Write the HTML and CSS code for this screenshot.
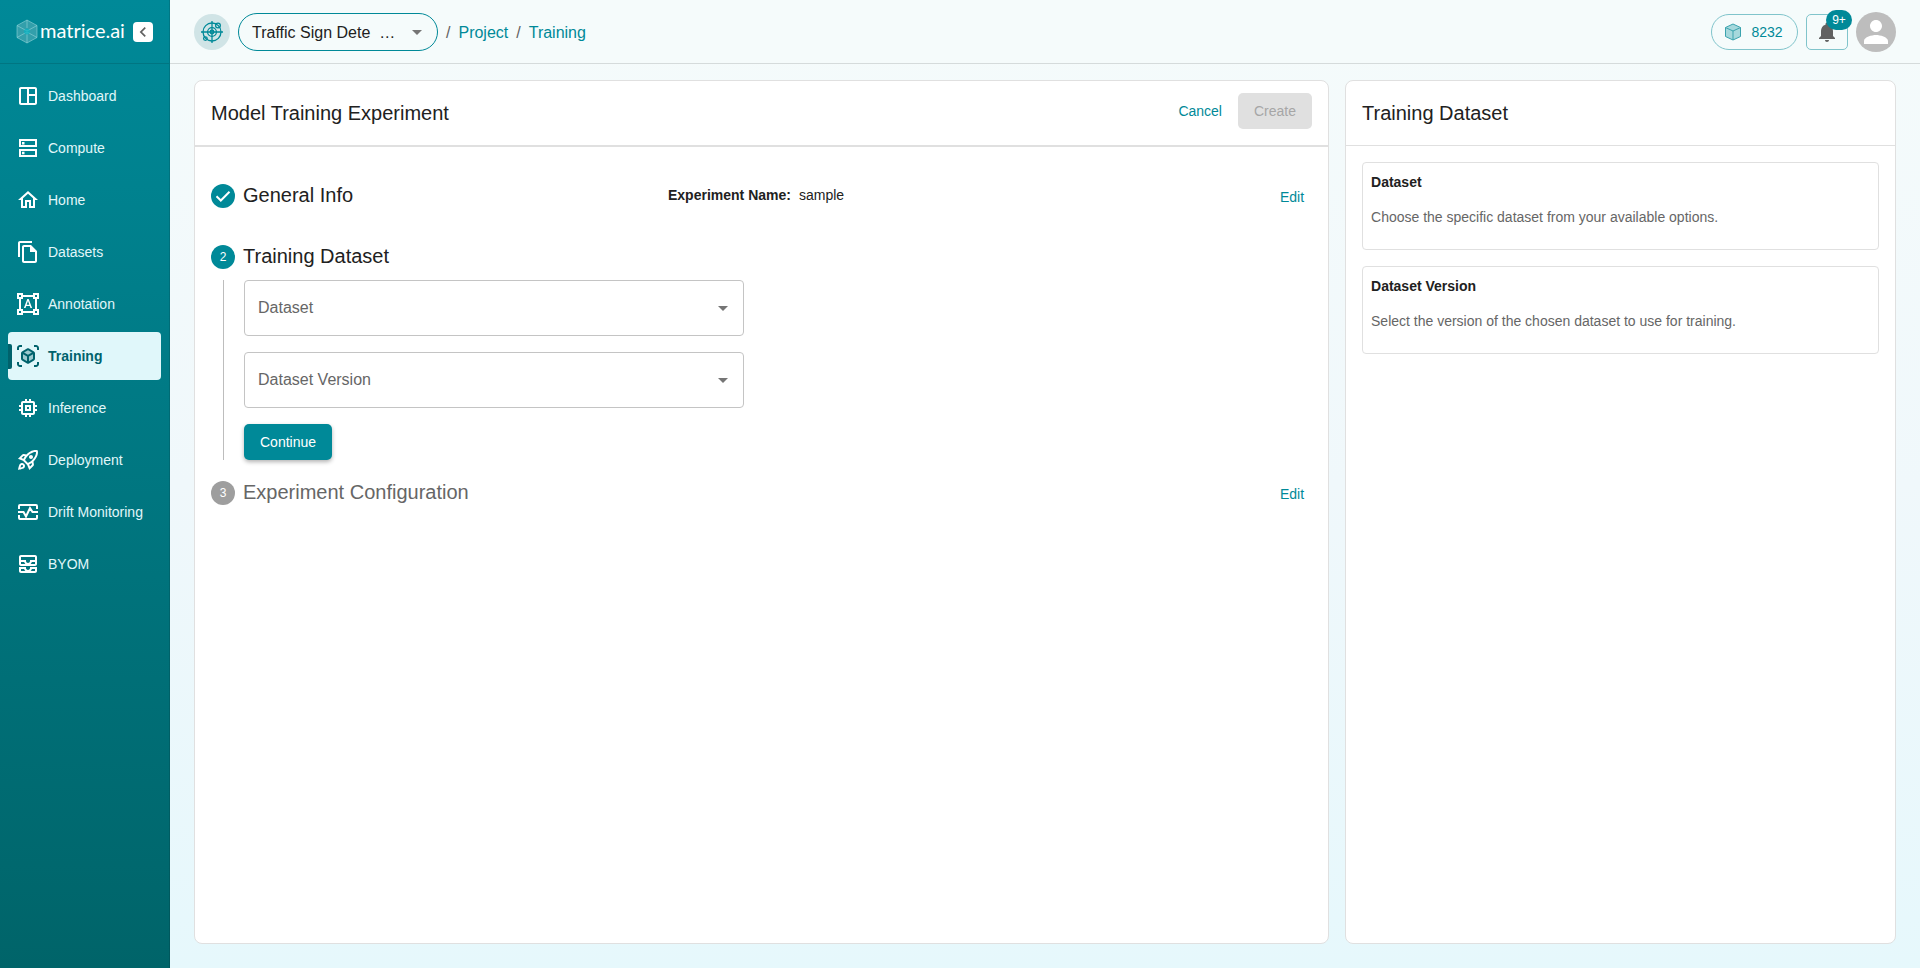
FILE: index.html
```html
<!DOCTYPE html>
<html lang="en">
<head>
<meta charset="utf-8">
<title>Model Training Experiment</title>
<link rel="stylesheet" href="styles.css">
</head>
<body>
<div class="app">
  <aside class="sidebar">
    <div class="brand">
      <a class="brand-link" href="#">
        <svg class="brand-mark" viewBox="0 0 22 25" fill="#fff" fill-opacity=".2" stroke="#a5dfe3" stroke-opacity=".5" stroke-width="1"><path d="M11 1 21 6.500V18.500L11 24 1 18.500V6.500Z"/><path fill="none" d="M11 1V9M11 14V24M1 6.500 11 12 21 6.500M1 18.500 11 13 21 18.500"/><circle cx="11" cy="12.500" r="3" fill="#00b4c4" fill-opacity=".6" stroke="none"/></svg>
        <span class="brand-name">matrice.ai</span>
      </a>
      <button class="collapse" type="button" aria-label="Collapse sidebar"><svg viewBox="0 0 24 24"><path fill="#616161" d="M15.410 7.410 14 6l-6 6 6 6 1.410-1.410L10.830 12z"/></svg></button>
    </div>
    <nav class="nav">
      <a class="nav-item" href="#"><svg viewBox="0 0 24 24"><path d="M19 3H5c-1.100 0-2 .9-2 2v14c0 1.100.9 2 2 2h14c1.100 0 2-.9 2-2V5c0-1.100-.9-2-2-2M5 19V5h6v14zm14 0h-6v-7h6zm0-9h-6V5h6z"/></svg>Dashboard</a>
      <a class="nav-item" href="#"><svg viewBox="0 0 24 24"><path d="M19 5v4H5V5zm2-2H3v8h18zm-2 12v4H5v-4zm2-2H3v8h18zM6 6h2.500v2.500H6zM6 15.700h2.500v2.500H6z"/></svg>Compute</a>
      <a class="nav-item" href="#"><svg viewBox="0 0 24 24"><path d="m12 5.690 5 4.500V18h-2v-6H9v6H7v-7.810zM12 3 2 12h3v8h6v-6h2v6h6v-8h3z"/></svg>Home</a>
      <a class="nav-item" href="#"><svg viewBox="0 0 24 24"><path d="M16 1H4c-1.100 0-2 .9-2 2v14h2V3h12zm-1 4H8c-1.100 0-1.990.9-1.990 2L6 21c0 1.100.890 2 1.990 2H19c1.100 0 2-.9 2-2V11zM8 21V7h6v5h5v9z"/></svg>Datasets</a>
      <a class="nav-item" href="#"><svg viewBox="0 0 24 24"><path d="M23 7V1h-6v2H7V1H1v6h2v10H1v6h6v-2h10v2h6v-6h-2V7zM3 3h2v2H3zm2 18H3v-2h2zm12-2H7v-2H5V7h2V5h10v2h2v10h-2zm4 2h-2v-2h2zM19 5V3h2v2zm-5.270 9h-3.490l-.73 2H7.890l3.400-9h1.400l3.410 9h-1.630zm-3.040-1.260h2.610L12 8.910z"/></svg>Annotation</a>
      <a class="nav-item active" href="#" aria-current="page"><svg viewBox="0 0 24 24"><path d="M3 4c0-.55.45-1 1-1h2V1H4C2.340 1 1 2.340 1 4v2h2zM3 20v-2H1v2c0 1.660 1.340 3 3 3h2v-2H4c-.55 0-1-.45-1-1M20 1h-2v2h2c.55 0 1 .45 1 1v2h2V4c0-1.660-1.340-3-3-3M21 20c0 .55-.45 1-1 1h-2v2h2c1.660 0 3-1.340 3-3v-2h-2z"/><path opacity=".3" d="m6 8.500 6-3.500 6 3.500v7L12 19l-6-3.500z"/><path d="M19 14.870V9.130c0-.72-.38-1.380-1-1.730l-5-2.880c-.31-.18-.65-.27-1-.27s-.69.09-1 .27L6 7.390c-.62.360-1 1.020-1 1.740v5.740c0 .72.380 1.380 1 1.730l5 2.880c.31.180.65.270 1 .270s.69-.09 1-.270l5-2.880c.62-.350 1-1.010 1-1.730m-8 2.300-4-2.300v-4.630l4 2.330zm1-6.330L8.040 8.530 12 6.250l3.960 2.280zm5 4.030-4 2.300v-4.600l4-2.330z"/></svg>Training</a>
      <a class="nav-item" href="#"><svg viewBox="0 0 24 24"><path d="M15 9H9v6h6zm-2 4h-2v-2h2zm8-2V9h-2V7c0-1.100-.9-2-2-2h-2V3h-2v2h-2V3H9v2H7c-1.100 0-2 .9-2 2v2H3v2h2v2H3v2h2v2c0 1.100.9 2 2 2h2v2h2v-2h2v2h2v-2h2c1.100 0 2-.9 2-2v-2h2v-2h-2v-2zm-4 6H7V7h10z"/></svg>Inference</a>
      <a class="nav-item" href="#"><svg viewBox="0 0 24 24"><path d="M6 15c-.83 0-1.580.34-2.120.88C2.700 17.060 2 22 2 22s4.940-.7 6.120-1.880C8.660 19.580 9 18.830 9 18c0-1.660-1.340-3-3-3m.71 3.710c-.28.28-2.170.76-2.170.76s.47-1.880.76-2.170c.17-.19.42-.3.7-.3.55 0 1 .45 1 1 0 .28-.11.53-.29.71m10.710-5.060c6.360-6.360 4.240-11.310 4.240-11.310S16.710.22 10.350 6.580l-2.490-.5c-.65-.13-1.330.08-1.810.55L2 10.690l5 2.140L11.170 17l2.140 5 4.050-4.050c.47-.47.68-1.150.55-1.810zM7.410 10.830l-1.910-.82 1.970-1.970 1.440.29c-.57.83-1.080 1.700-1.500 2.500m6.580 7.670-.82-1.910c.8-.42 1.670-.93 2.490-1.500l.29 1.440zM16 12.240c-1.320 1.320-3.380 2.400-4.040 2.730l-2.930-2.930c.32-.65 1.400-2.710 2.730-4.040 4.680-4.680 8.230-3.990 8.230-3.990s.69 3.550-3.990 8.230M15 11c1.100 0 2-.9 2-2s-.9-2-2-2-2 .9-2 2 .9 2 2 2"/></svg>Deployment</a>
      <a class="nav-item" href="#"><svg class="lines" viewBox="0 0 24 24"><path d="M3 9V6Q3 5 4 5H20Q21 5 21 6V9M3 15V18Q3 19 4 19H20Q21 19 21 18V15M2 12H7.500L10 16.500 14 8 16.500 12H22"/></svg>Drift Monitoring</a>
      <a class="nav-item" href="#"><svg viewBox="0 0 24 24"><path d="M19 3H5c-1.100 0-2 .9-2 2v7c0 1.100.9 2 2 2h14c1.100 0 2-.9 2-2V5c0-1.100-.9-2-2-2M5 10h3.130c.21.78.67 1.470 1.270 2H5zm14 2h-4.400c.6-.53 1.060-1.220 1.270-2H19zm0-4h-5v1c0 1.070-.93 2-2 2s-2-.93-2-2V8H5V5h14zm-5 7v1c0 .47-.19.9-.48 1.250-.37.45-.92.75-1.520.75s-1.150-.3-1.520-.75c-.29-.35-.48-.78-.48-1.250v-1H3v4c0 1.100.9 2 2 2h14c1.100 0 2-.9 2-2v-4zm-9 2h3.130c.02.09.06.17.09.25.24.68.65 1.280 1.180 1.750H5zm14 2h-4.400c.54-.47.95-1.070 1.180-1.750.03-.08.07-.16.09-.25H19z"/></svg>BYOM</a>
    </nav>
  </aside>

  <div class="page">
    <header class="topbar">
      <div class="crumbs">
        <span class="project-icon"><svg viewBox="0 0 24 24" fill="none" stroke="#008998" stroke-width="1.400"><circle cx="12" cy="12" r="9.800"/><circle cx="12" cy="12" r="4.800"/><circle cx="12" cy="12" r="2"/><path d="M12 0v24M0 12h24"/><circle cx="18.500" cy="5" r="2.600"/><circle cx="4.800" cy="19.200" r="2"/></svg></span>
        <select class="project-select" aria-label="Project"><option>Traffic Sign Dete&nbsp; …</option></select>
        <nav class="trail" aria-label="Breadcrumb"><span class="slash">/</span><a href="#">Project</a><span class="slash">/</span><a href="#">Training</a></nav>
      </div>
      <div class="tools">
        <button class="credits" type="button"><svg viewBox="0 0 18 18" fill="#a6d8dc" stroke="#3aa3ae" stroke-width="1" stroke-linejoin="round"><path d="M9 1 16.500 4.500V13.500L9 17 1.500 13.500V4.500Z"/><path d="M1.500 4.500 9 8 16.500 4.500M9 8V17"/></svg>8232</button>
        <button class="bell" type="button" aria-label="Notifications"><svg viewBox="0 0 24 24"><path fill="#616161" d="M12 22c1.100 0 2-.9 2-2h-4c0 1.100.89 2 2 2m6-6v-5c0-3.070-1.640-5.640-4.500-6.320V4c0-.83-.67-1.500-1.500-1.500s-1.500.67-1.500 1.500v.68C7.630 5.360 6 7.920 6 11v5l-2 2v1h16v-1z"/></svg><span class="badge">9+</span></button>
        <button class="avatar" type="button" aria-label="Account"><svg viewBox="0 0 24 24"><path fill="#fff" d="M12 12c2.210 0 4-1.790 4-4s-1.790-4-4-4-4 1.790-4 4 1.790 4 4 4m0 2c-2.670 0-8 1.340-8 4v2h16v-2c0-2.660-5.330-4-8-4"/></svg></button>
      </div>
    </header>

    <main class="panels">
      <section class="panel">
        <div class="panel-head main-head">
          <h1>Model Training Experiment</h1>
          <div class="head-actions">
            <button class="text-button" type="button">Cancel</button>
            <button class="create" type="button" disabled>Create</button>
          </div>
        </div>
        <div class="steps">
          <div class="step-row">
            <div class="step-label"><svg class="dot" viewBox="0 0 24 24"><path fill="none" stroke="#fff" stroke-width="2" d="M5.500 12.300 9.800 16.500 18.500 7.800"/></svg><h2>General Info</h2></div>
            <p class="summary"><strong>Experiment Name:</strong>sample</p>
            <button class="text-button edit" type="button">Edit</button>
          </div>
          <div class="step-row current">
            <div class="step-label"><span class="dot">2</span><h2>Training Dataset</h2></div>
          </div>
          <form class="step-body">
            <select class="field" aria-label="Dataset"><option>Dataset</option></select>
            <select class="field" aria-label="Dataset Version"><option>Dataset Version</option></select>
            <button class="continue" type="button">Continue</button>
          </form>
          <div class="step-row pending">
            <div class="step-label"><span class="dot">3</span><h2>Experiment Configuration</h2></div>
            <button class="text-button edit" type="button">Edit</button>
          </div>
        </div>
      </section>

      <section class="panel">
        <div class="panel-head"><h2>Training Dataset</h2></div>
        <div class="hints">
          <article class="hint"><h3>Dataset</h3><p>Choose the specific dataset from your available options.</p></article>
          <article class="hint"><h3>Dataset Version</h3><p>Select the version of the chosen dataset to use for training.</p></article>
        </div>
      </section>
    </main>
  </div>
</div>
</body>
</html>
```
FILE: styles.css
```css
* { box-sizing: border-box; }
body {
  margin: 0;
  font: 14px/20px "Liberation Sans", Arial, sans-serif;
  color: #212121;
}
h1, h2, h3, p { margin: 0; }
h1, h2 { font-size: 20px; line-height: 32px; font-weight: 400; }
a { color: #008998; text-decoration: none; }
button, select { font: inherit; cursor: pointer; }
svg { display: block; flex: none; }

.app { display: flex; min-height: 100vh; }

.sidebar {
  width: 170px;
  flex: none;
  background: linear-gradient(#008998, #006469);
  border-right: 1px solid rgba(0, 0, 0, .12);
}
.brand {
  height: 64px;
  padding: 0 16px;
  display: flex;
  align-items: center;
  justify-content: space-between;
  border-bottom: 1px solid rgba(0, 0, 0, .12);
}
.brand-link { display: flex; align-items: center; gap: 2px; color: #fff; }
.brand-mark { width: 22px; height: 25px; }
.brand-name { font: 20px/24px Lato, sans-serif; padding-bottom: 4px; }
.collapse {
  width: 20px;
  height: 20px;
  padding: 0;
  border: 0;
  border-radius: 4px;
  background: #fff;
  flex: none;
}
.collapse svg { width: 20px; height: 20px; }

.nav { display: flex; flex-direction: column; gap: 4px; padding: 8px; }
.nav-item {
  position: relative;
  height: 48px;
  padding: 0 8px;
  display: flex;
  align-items: center;
  gap: 8px;
  border-radius: 4px;
  color: #e0f7fa;
  white-space: nowrap;
}
.nav-item svg { width: 24px; height: 24px; fill: #fff; }
.nav-item .lines { fill: none; stroke: #fff; stroke-width: 2; }
.nav-item.active { background: #e0f7fa; color: #00626c; font-weight: 700; }
.nav-item.active svg { fill: #00626c; }
.nav-item.active::before {
  content: "";
  position: absolute;
  left: 0;
  top: 12px;
  width: 4px;
  height: 25px;
  border-radius: 0 2px 2px 0;
  background: #00626c;
}

.page {
  flex: 1;
  min-width: 0;
  display: flex;
  flex-direction: column;
  background: linear-gradient(#f5fbfb, #f0f8fb 50%, #e6f8fc);
}
.topbar {
  height: 64px;
  padding: 0 24px;
  display: flex;
  align-items: center;
  justify-content: space-between;
  border-bottom: 1px solid #d5dbdb;
  background: #f5fbfb;
}
.crumbs, .tools, .trail { display: flex; align-items: center; gap: 8px; }
.crumbs { font-size: 16px; }
.trail { padding-top: 2px; }
.slash { color: #616161; }
.project-icon {
  width: 36px;
  height: 36px;
  display: grid;
  place-items: center;
  border-radius: 50%;
  background: #d0e4e6;
}
.project-icon svg { width: 22px; height: 22px; }
.project-select, .field {
  appearance: none;
  background: no-repeat url("data:image/svg+xml,%3Csvg xmlns='http://www.w3.org/2000/svg' width='24' height='24'%3E%3Cpath fill='%23757575' d='m7 10 5 5 5-5z'/%3E%3C/svg%3E");
}
.project-select {
  width: 200px;
  height: 38px;
  padding: 2px 40px 0 13px;
  border: 1px solid #008998;
  border-radius: 19px;
  color: #212121;
  background-position: right 8px center;
}
.credits {
  height: 36px;
  width: 87px;
  padding: 0 2px 0 0;
  display: flex;
  align-items: center;
  justify-content: center;
  gap: 9px;
  border: 1px solid #80c4cb;
  border-radius: 18px;
  background: none;
  color: #008998;
}
.credits svg { width: 18px; height: 18px; }
.bell {
  position: relative;
  width: 42px;
  height: 36px;
  padding: 0;
  display: grid;
  place-items: center;
  border: 1px solid #80c4cb;
  border-radius: 5px;
  background: none;
}
.bell svg { width: 24px; height: 24px; }
.badge {
  position: absolute;
  top: -5px;
  right: -5px;
  width: 26px;
  height: 20px;
  border-radius: 10px;
  background: #008998;
  color: #fff;
  font-size: 12px;
}
.avatar {
  width: 40px;
  height: 40px;
  padding: 0;
  border: 0;
  border-radius: 50%;
  background: #bdbdbd;
  display: grid;
  place-items: center;
}
.avatar svg { width: 36px; height: 36px; }

.panels {
  flex: 1;
  display: grid;
  grid-template-columns: 206fr 100fr;
  gap: 16px;
  padding: 16px 24px 24px;
}
.panel {
  min-width: 0;
  border: 1px solid #e0e0e0;
  border-radius: 8px;
  background: #fff;
}
.panel-head {
  padding: 16px;
  border-bottom: 1px solid #e0e0e0;
}
.main-head {
  display: flex;
  justify-content: space-between;
  border-bottom-width: 2px;
}
.head-actions { display: flex; align-items: center; gap: 8px; height: 28px; }
.text-button {
  padding: 8px;
  border: 0;
  background: none;
  color: #008998;
}
.create, .continue {
  height: 36px;
  padding: 0 16px;
  border: 0;
  border-radius: 5px;
}
.create { background: #e0e0e0; color: #a6a6a6; cursor: default; }

.steps { padding: 32px 16px; }
.step-row { display: flex; align-items: center; height: 32px; }
.step-row.current { margin: 29px 0 8px; }
.step-row.pending { margin-top: 16px; }
.step-row.pending h2 { color: #666; }
.step-label { display: flex; align-items: center; gap: 8px; flex: 0 0 457px; }
.dot {
  width: 24px;
  height: 24px;
  margin-top: 2px;
  border-radius: 50%;
  background: #008998;
  color: #fff;
  font-size: 12px;
  line-height: 24px;
  text-align: center;
}
.pending .dot { background: #9e9e9e; }
.summary { display: flex; gap: 8px; }
.edit { margin-left: auto; padding-top: 12px; }
.step-body {
  margin-left: 12px;
  padding-left: 20px;
  border-left: 1px solid #bdbdbd;
  display: flex;
  flex-direction: column;
  align-items: flex-start;
  gap: 16px;
}
.field {
  width: 500px;
  max-width: 100%;
  height: 56px;
  padding: 0 40px 0 13px;
  border: 1px solid #c4c4c4;
  border-radius: 4px;
  color: #666;
  font-size: 16px;
  background-position: right 8px center;
}
.continue {
  background: #008998;
  color: #fff;
  box-shadow: 0 2px 4px rgba(0, 0, 0, .3);
}

.hints { display: flex; flex-direction: column; gap: 16px; padding: 16px; }
.hint {
  padding: 9px 8px 22px;
  border: 1px solid #e0e0e0;
  border-radius: 4px;
}
.hint h3 { font-size: 14px; line-height: 20px; }
.hint p { margin-top: 15px; color: #666; }
```
